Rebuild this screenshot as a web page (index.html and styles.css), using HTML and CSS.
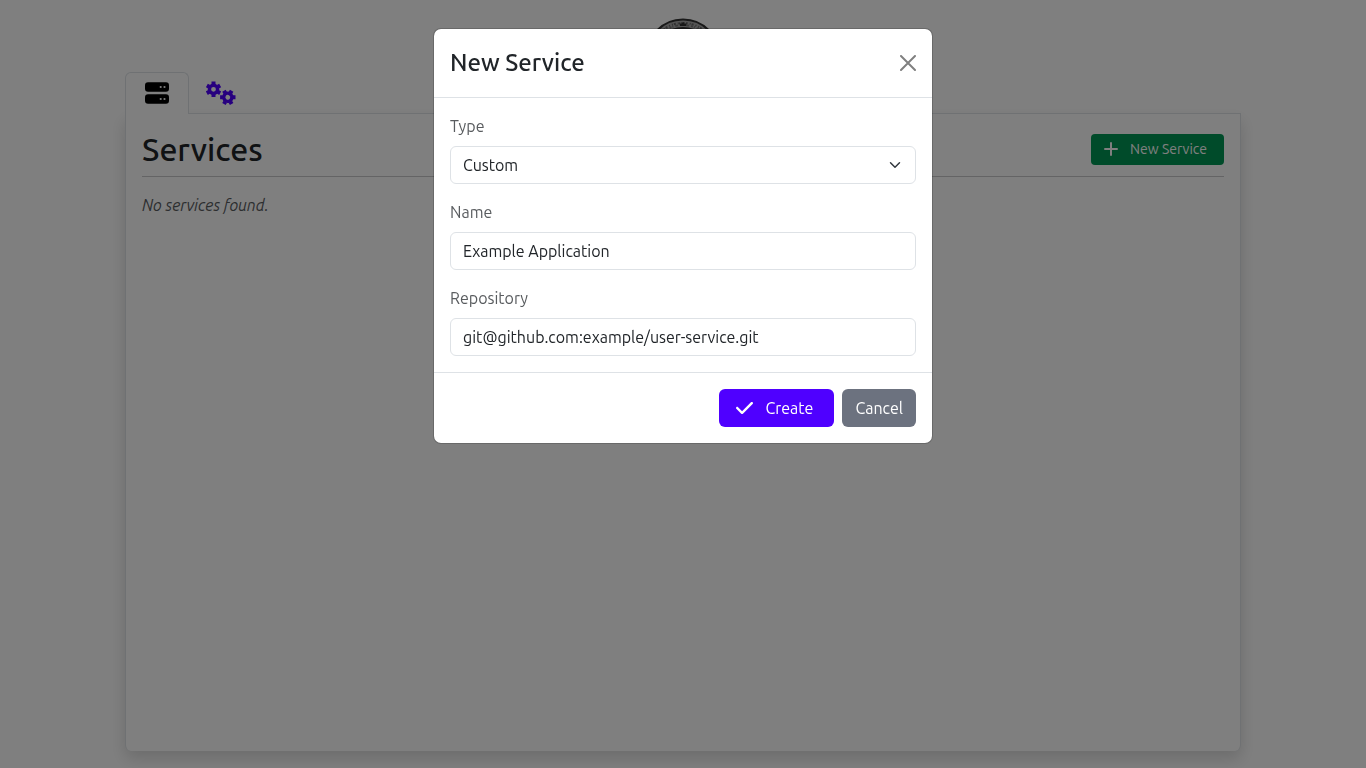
FILE: index.html
```html
<!DOCTYPE html>
<html lang="en">
<head>
<meta charset="utf-8">
<meta name="viewport" content="width=device-width, initial-scale=1">
<title>Services</title>
<link rel="stylesheet" href="styles.css">
</head>
<body>
<div class="page">
  <header class="masthead">
    <svg class="seal" viewBox="0 0 76 76" aria-hidden="true">
      <g fill="none">
        <circle cx="38" cy="38" r="32" stroke="#aaa" stroke-width="8"/>
        <circle cx="38" cy="38" r="33" stroke="#666" stroke-width="2" stroke-dasharray="1 1 2 2 1 2"/>
        <circle cx="38" cy="38" r="31" stroke="#777" stroke-width="2" stroke-dasharray="2 1 1 2 3 2"/>
        <circle cx="38" cy="38" r="36.500" stroke="#333" stroke-width="2"/>
        <circle cx="38" cy="38" r="28" stroke="#333" stroke-width="2"/>
      </g>
      <path fill="#333" d="M34 4l2 2 2-2 2 2 2-2-1 4h-6z"/>
    </svg>
  </header>
  <nav class="tabs" aria-label="Sections">
    <a class="tab tab-active" href="#services" aria-label="Services">
      <svg class="tab-icon" viewBox="0 0 30 24" aria-hidden="true">
        <rect x="3" y="1.200" width="24" height="9.500" rx="3"/>
        <rect x="3" y="13.200" width="24" height="9.500" rx="3"/>
        <g fill="#fff"><circle cx="18.700" cy="6" r="1.100"/><circle cx="22.500" cy="6" r="1.100"/><circle cx="18.700" cy="18" r="1.100"/><circle cx="22.500" cy="18" r="1.100"/></g>
      </svg>
    </a>
    <a class="tab" href="#settings" aria-label="Settings">
      <svg class="tab-icon" viewBox="0 0 30 24" aria-hidden="true">
        <defs>
          <g id="gear" fill="none" stroke="currentColor">
            <circle r="4.100" stroke-width="3.400"/>
            <path stroke-width="4" stroke-linejoin="round" d="M0-5v-2.700M0 5v2.700M4.330-2.500l2.340-1.350M-4.330-2.500l-2.340-1.350M4.330 2.500l2.340 1.350M-4.330 2.500l-2.340 1.350"/>
          </g>
        </defs>
        <use href="#gear" transform="translate(7.500 8.300)"/>
        <use href="#gear" transform="translate(21.800 16.300) rotate(30)"/>
      </svg>
    </a>
  </nav>
  <main class="panel" id="services">
    <div class="panel-head">
      <h1 class="panel-title">Services</h1>
      <button class="btn btn-small btn-success" type="button">
        <svg class="plus" viewBox="0 0 14 14" aria-hidden="true"><path d="M7 1v12M1 7h12"/></svg>
        New Service
      </button>
    </div>
    <p class="empty">No services found.</p>
  </main>
</div>

<div class="backdrop">
  <form class="modal" role="dialog" aria-modal="true" aria-labelledby="modal-title">
    <div class="modal-head">
      <h2 class="modal-title" id="modal-title">New Service</h2>
      <button class="close" type="button" aria-label="Close">
        <svg viewBox="0 0 16 16" aria-hidden="true"><path d="M1 1l14 14M15 1L1 15"/></svg>
      </button>
    </div>
    <div class="modal-body">
      <div class="field">
        <label class="label" for="type">Type</label>
        <select class="control select" id="type"><option>Custom</option></select>
      </div>
      <div class="field">
        <label class="label" for="name">Name</label>
        <input class="control" id="name" type="text" value="Example Application">
      </div>
      <div class="field">
        <label class="label" for="repository">Repository</label>
        <input class="control" id="repository" type="text" value="git@github.com:example/user-service.git">
      </div>
    </div>
    <div class="modal-foot">
      <button class="btn btn-primary" type="submit">
        <svg class="check" viewBox="0 0 448 512" aria-hidden="true"><path d="M438.600 105.400c12.500 12.500 12.500 32.800 0 45.300l-256 256c-12.500 12.500-32.800 12.500-45.300 0l-128-128c-12.500-12.500-12.500-32.800 0-45.300s32.800-12.500 45.300 0L160 338.700 393.400 105.400c12.500-12.500 32.800-12.500 45.300 0z"/></svg>
        Create
      </button>
      <button class="btn btn-secondary" type="button">Cancel</button>
    </div>
  </form>
</div>
</body>
</html>
```
FILE: styles.css
```css
* { box-sizing: border-box; }
body {
  margin: 0;
  background: #fff;
  color: #212529;
  font: 400 16px/24px Ubuntu, "Noto Sans", sans-serif;
}
.page {
  display: flex;
  flex-direction: column;
  min-height: 100vh;
  max-width: 1140px;
  margin: 0 auto;
  padding: 0 12px 17px;
}
.masthead {
  display: flex;
  justify-content: center;
  height: 72px;
  padding-top: 18px;
}
.seal { flex: none; width: 76px; height: 76px; }
.tabs { display: flex; z-index: 1; }
.tab {
  display: flex;
  padding: 8px 16px;
  border: 1px solid transparent;
  border-radius: 6px 6px 0 0;
  color: #4f00ff;
}
.tab-active {
  border-color: #dee2e6;
  border-bottom: 0;
  background: #fff;
  color: #000;
}
.tab-icon { width: 30px; height: 24px; fill: currentColor; }
.panel {
  flex: 1;
  margin-top: -1px;
  padding: 16px;
  border: 1px solid #dee2e6;
  border-bottom: 0;
  border-radius: 0 0 6px 6px;
  background: #fff;
  box-shadow: 0 8px 16px rgba(0, 0, 0, .15);
}
.panel-head {
  display: flex;
  align-items: center;
  justify-content: space-between;
  padding-bottom: 8px;
  border-bottom: 1px solid #c8c9ca;
}
.panel-title { margin: 0; font-size: 32px; line-height: 38px; font-weight: 500; }
.empty { margin: 16px 0; color: #595c5f; font-style: italic; }
.btn {
  display: inline-flex;
  align-items: center;
  padding: 6px 12px;
  border: 1px solid transparent;
  border-radius: 6px;
  color: #fff;
  font: inherit;
}
.btn-small { padding: 4px 16px 4px 12px; border-radius: 4px; font-size: 14px; line-height: 21px; }
.btn-success { background: #009654; }
.btn-primary { padding: 6px 20px 6px 16px; background: #4f00ff; }
.btn-secondary { background: #6c727f; }
.plus { width: 14px; height: 14px; margin-right: 12px; fill: none; stroke: currentColor; stroke-width: 2; stroke-linecap: round; }
.check { width: 17px; height: 20px; margin-right: 12px; fill: currentColor; }
.backdrop {
  position: fixed;
  inset: 0;
  z-index: 2;
  padding: 28px 16px;
  overflow: auto;
  background: rgba(0, 0, 0, .5);
}
.modal {
  max-width: 500px;
  margin: 0 auto;
  border: 1px solid rgba(0, 0, 0, .175);
  border-radius: 8px;
  background: #fff;
  background-clip: padding-box;
}
.modal-head {
  display: flex;
  align-items: center;
  justify-content: space-between;
  padding: 16px;
  border-bottom: 1px solid #dee2e6;
}
.modal-title { margin: 0; font-size: 24px; line-height: 36px; font-weight: 500; }
.close { display: flex; padding: 0; border: 0; background: none; color: #808080; }
.close svg { width: 16px; height: 16px; fill: none; stroke: currentColor; stroke-width: 2; stroke-linecap: round; }
.modal-body { display: grid; gap: 16px; padding: 16px; }
.field { display: grid; gap: 8px; }
.label { color: #595c5f; }
.control {
  width: 100%;
  height: 38px;
  padding: 6px 12px;
  border: 1px solid #dee2e6;
  border-radius: 6px;
  background: #fff;
  color: #212529;
  font: inherit;
}
.select {
  appearance: none;
  background: #fff url("data:image/svg+xml,%3Csvg xmlns='http://www.w3.org/2000/svg' viewBox='0 0 16 16'%3E%3Cpath fill='none' stroke='%23343a40' stroke-linecap='round' stroke-linejoin='round' stroke-width='2' d='m2 5 6 6 6-6'/%3E%3C/svg%3E") no-repeat right 12px center / 16px 12px;
}
.modal-foot {
  display: flex;
  justify-content: flex-end;
  gap: 8px;
  padding: 16px;
  border-top: 1px solid #dee2e6;
}
```
